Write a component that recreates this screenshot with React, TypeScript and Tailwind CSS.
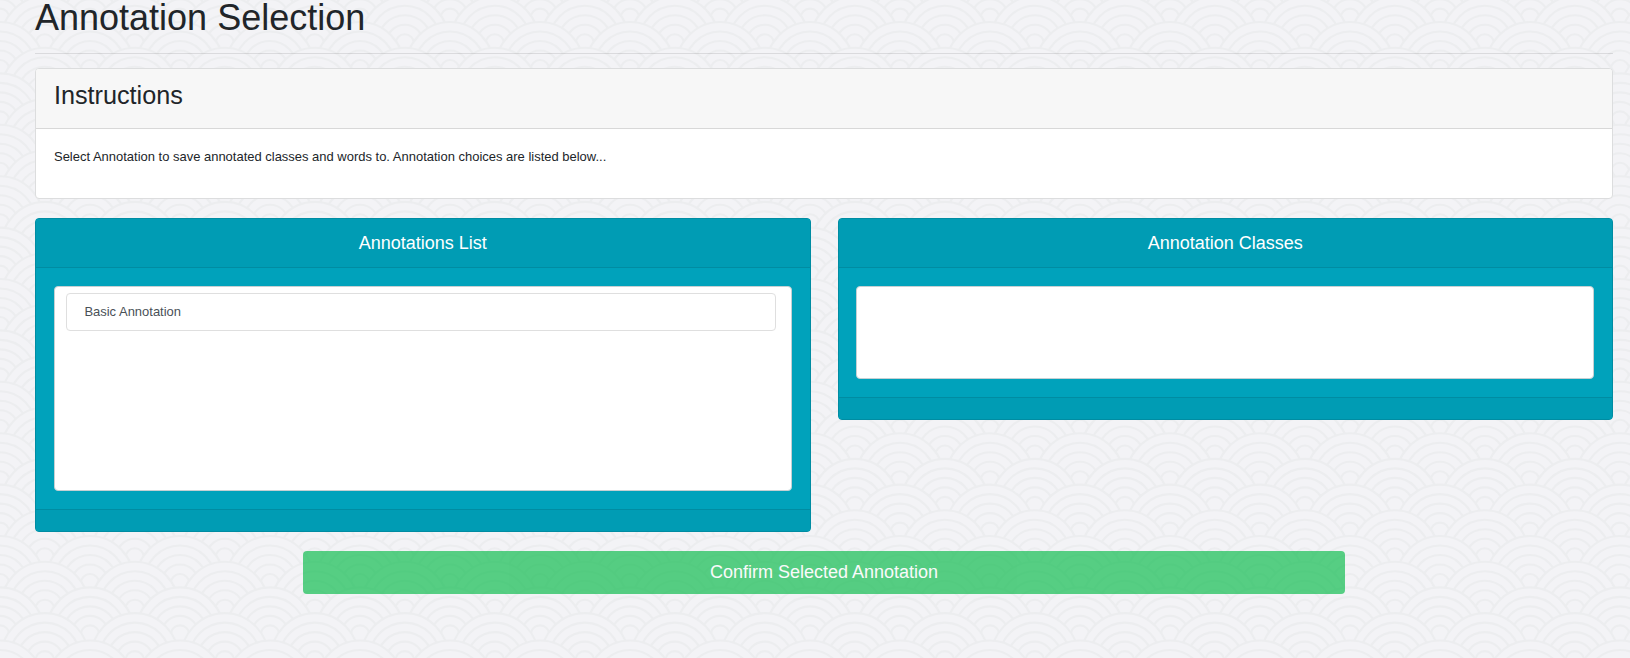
import type { ReactNode } from 'react';

const RINGS = [
  [44.5, 47],
  [36, 37.5],
  [27.5, 28],
  [18.5, 18.5],
  [9.2, 9],
];

function WavePattern() {
  const scales: ReactNode[] = [];
  for (let row = -2; row <= 26; row++) {
    const top = 22 + row * 25.7 + (row >= 24 ? 1.7 : 0);
    const shift = row % 2 === 0 ? 0 : 44.8;
    for (let col = -1; col <= 19; col++) {
      scales.push(<use key={`${row}:${col}`} href="#scale" x={col * 90 + shift} y={top + 47} />);
    }
  }
  return (
    <svg className="absolute inset-0 -z-10" width="1630" height="658" aria-hidden="true">
      <defs>
        <g id="scale" fill="#f3f3f6" stroke="#ecedef" strokeWidth="2.1">
          {RINGS.map(([rx, ry]) => (
            <ellipse key={rx} rx={rx} ry={ry} />
          ))}
        </g>
      </defs>
      {scales}
    </svg>
  );
}

function Panel({ title, children }: { title: string; children: ReactNode }) {
  return (
    <section className="flex-1 rounded-[4px] border border-[#008ca2] bg-[#00a2bb]">
      <h2 className="flex h-[49px] items-center justify-center border-b border-[#008ca2] bg-[#009cb4] text-[18px] text-white">
        {title}
      </h2>
      <div className="px-[17.9px] py-[18px]">{children}</div>
      <div className="h-[22px] border-t border-[#008ca2] bg-[#009cb4]" />
    </section>
  );
}

export default function App() {
  return (
    <main className="relative isolate h-[658px] w-[1630px] overflow-hidden bg-[#f3f3f6] pr-[17px] pl-[35px] font-['Liberation_Sans',Arial,sans-serif] text-[12.98px] text-[#212529]">
      <WavePattern />
      <h1 className="h-[53px] text-[36px] leading-[36px]">Annotation Selection</h1>
      <hr className="mb-[14px] border-t border-black/10" />

      <section className="h-[131px] rounded-[4px] border border-[#dcddde] bg-white">
        <div className="h-[60px] rounded-t-[3px] border-b border-[#d8d8d8] bg-[#f7f7f7] px-[18px] pt-[11px]">
          <h2 className="text-[25.2px] leading-[30px]">Instructions</h2>
        </div>
        <p className="px-[18px] pt-[18px] leading-[19px]">
          Select Annotation to save annotated classes and words to. Annotation choices are listed below...
        </p>
      </section>

      <div className="mt-[19px] flex items-start gap-[27px]">
        <Panel title="Annotations List">
          <div className="h-[205px] rounded-[4px] border border-[#c5d0d3] bg-white pt-[6px] pr-[15px] pl-[11px]">
            <button className="flex h-[38px] w-full items-center rounded-[4px] border border-[#dfdfdf] px-[17.5px] text-[#495057]">
              Basic Annotation
            </button>
          </div>
        </Panel>
        <Panel title="Annotation Classes">
          <div className="h-[93px] rounded-[4px] border border-[#c5d0d3] bg-white" />
        </Panel>
      </div>

      <button className="mx-auto mt-[19px] block h-[43px] w-[1042px] rounded-[4px] bg-[#02ba45] text-[18px] text-white opacity-65">
        Confirm Selected Annotation
      </button>
    </main>
  );
}
